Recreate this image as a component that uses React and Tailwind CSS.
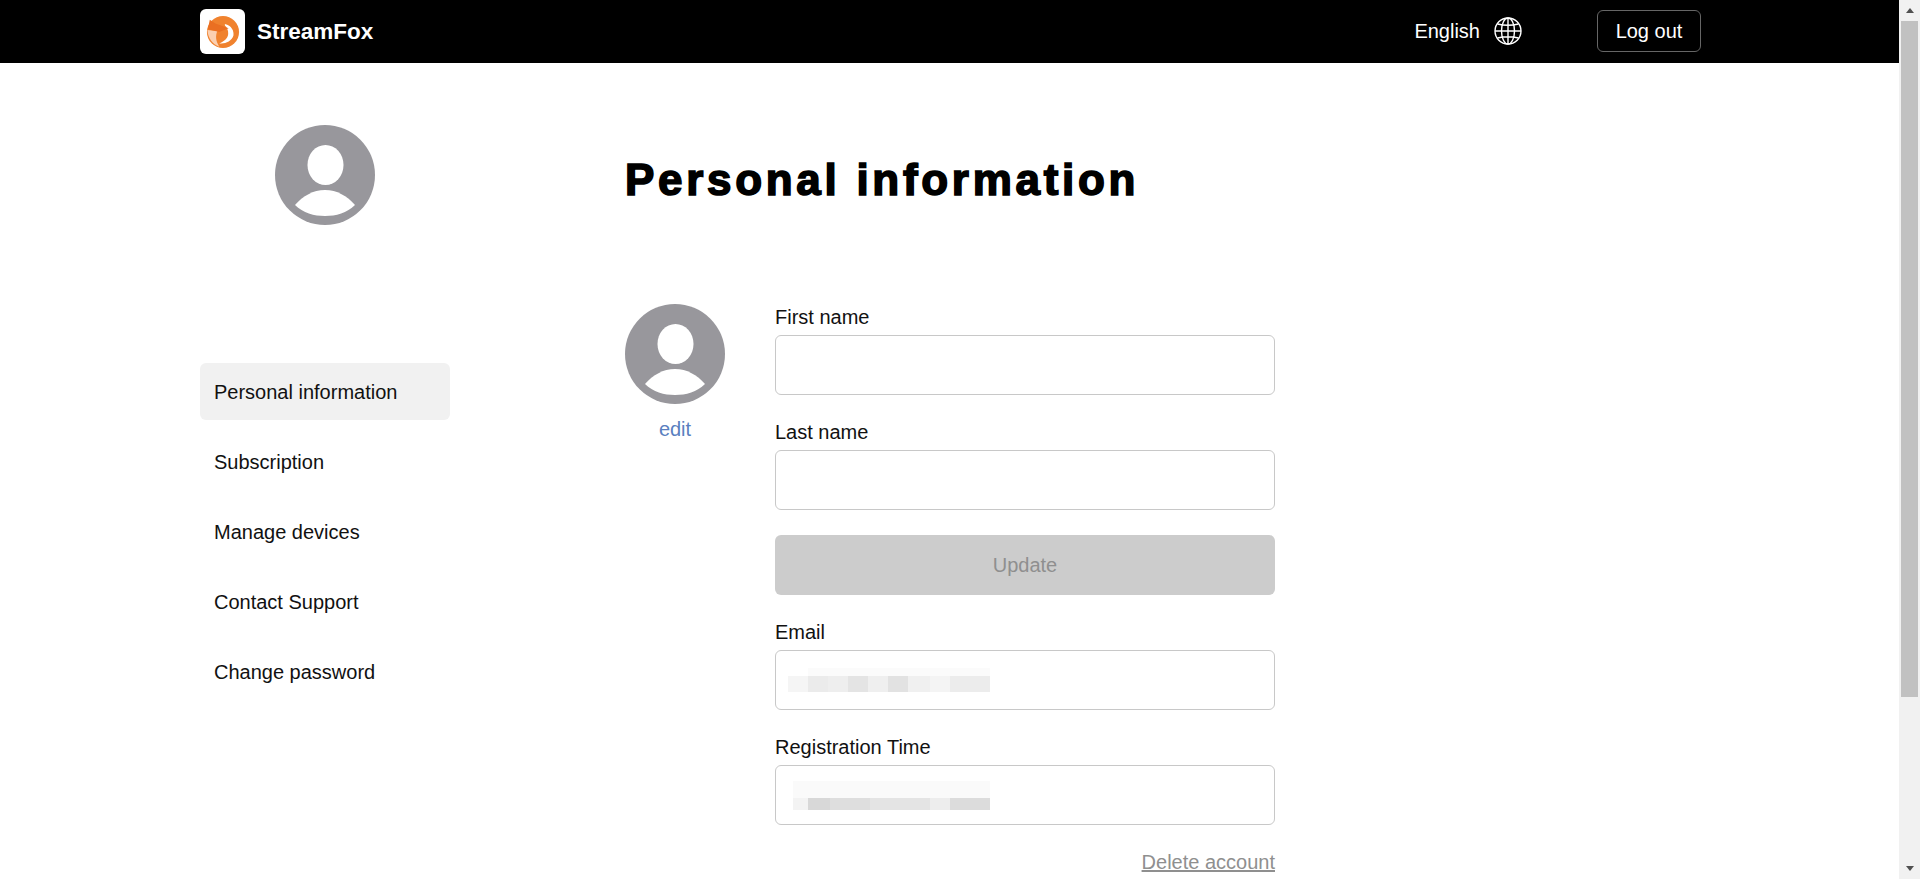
const sans = "font-['Liberation_Sans',Arial,sans-serif]";

function Avatar() {
  return (
    <svg viewBox="0 0 100 100" className="w-[100px] h-[100px] block">
      <circle cx="50" cy="50" r="50" fill="#98979c" />
      <ellipse cx="50.5" cy="40" rx="18" ry="20" fill="#fff" />
      <path d="M20 80 C28 71 38 65 50 65 C62 65 72 71 80 80 C72 88 61 91 50 91 C39 91 28 88 20 80 Z" fill="#fff" />
    </svg>
  );
}

function Logo() {
  return (
    <div className="w-[45px] h-[45px] rounded-[6px] bg-white flex items-center justify-center">
      <svg viewBox="0 0 36 36" className="w-[34px] h-[34px]">
        <circle cx="18" cy="18" r="17" fill="#f0822e" />
        <path d="M1.5 16 L12 17 C10 22 10 27 14 33.5 C7 31 2 25 1.5 16 Z" fill="#fbcfb0" />
        <path d="M20 9.5 C27 11 30 17 29 22 C27 28 20 31 14 30 C19 28 23 25 23.5 20 C23.8 16 22 13 20 11 Z" fill="#fff" />
        <path d="M4 5 L10 9 L24 14 L14 18 L2 15 Z" fill="#ea6f22" />
      </svg>
    </div>
  );
}

function Globe() {
  return (
    <svg viewBox="0 0 28 28" className="w-[28px] h-[28px]" fill="none" stroke="#fff" strokeWidth="1.4">
      <circle cx="14" cy="14" r="13" />
      <ellipse cx="14" cy="14" rx="6.5" ry="13" />
      <path d="M14 1 V27 M1 14 H27 M3.5 7 Q14 9.5 24.5 7 M3.5 21 Q14 18.5 24.5 21" />
    </svg>
  );
}

function Field({ label, children }) {
  return (
    <div className="flex flex-col">
      <label className="text-[20px] leading-[24px] mb-[6px] text-[#111]">{label}</label>
      <div className="h-[60px] rounded-[6px] border border-[#c8c8c8] bg-white flex items-center px-[12px]">{children}</div>
    </div>
  );
}

const emailSegs = [
  ["#f5f5f5", 20], ["#ebebeb", 20], ["#eeeeee", 20], ["#e4e4e4", 20], ["#efefef", 20],
  ["#e2e2e2", 20], ["#f0f0f0", 22], ["#f4f4f4", 20], ["#ececec", 40],
];
const regSegs = [
  ["#f3f3f3", 15], ["#d8d8d8", 22], ["#dedede", 40], ["#e4e4e4", 60], ["#ededed", 20], ["#dcdcdc", 40],
];

function BlurBlock({ segs, bandClass, barClass, offsetClass }) {
  return (
    <div className={`flex flex-col ${offsetClass}`}>
      <div className={bandClass}></div>
      <div className={`flex ${barClass}`}>
        {segs.map(([c, w], i) => (
          <div key={i} style={{ backgroundColor: c, width: w }}></div>
        ))}
      </div>
    </div>
  );
}

const nav = ["Subscription", "Manage devices", "Contact Support", "Change password"];

export default function App() {
  return (
    <div className={`flex h-[879px] overflow-hidden bg-white ${sans}`}>
      <div className="flex-1 min-w-0 flex flex-col">
        <header className="h-[63px] bg-black flex items-center justify-between pl-[200px] pr-[198px] shrink-0">
          <div className="flex items-center gap-[12px]">
            <Logo />
            <span className="text-white font-bold text-[22.5px]">StreamFox</span>
          </div>
          <div className="flex items-center pb-[2px]">
            <span className="text-white text-[20px]">English</span>
            <div className="ml-[14px]"><Globe /></div>
            <button className="ml-[75px] w-[104px] h-[42px] rounded-[6px] border border-[#666] text-white text-[20px]">Log out</button>
          </div>
        </header>
        <div className="flex pl-[200px]">
          <aside className="w-[250px] shrink-0 flex flex-col">
            <div className="flex justify-center pt-[62px]"><Avatar /></div>
            <nav className="mt-[138px] flex flex-col gap-[13px]">
              <div className="h-[57px] rounded-[6px] bg-[#f1f1f1] flex items-center px-[14px] text-[20px] text-[#111]">Personal information</div>
              {nav.map((n) => (
                <div key={n} className="h-[57px] flex items-center px-[14px] text-[20px] text-[#111]">{n}</div>
              ))}
            </nav>
          </aside>
          <main className="ml-[175px] w-[650px]">
            <h1 className="mt-[92px] h-[50px] text-[44px] leading-[50px] font-bold tracking-[3.7px] text-black [-webkit-text-stroke:1.6px_black]">Personal information</h1>
            <div className="mt-[99px] flex">
              <div className="w-[100px] flex flex-col items-center">
                <Avatar />
                <span className="mt-[12px] text-[20px] leading-[26px] text-[#5a7fc0]">edit</span>
              </div>
              <div className="ml-[50px] mt-[1px] w-[500px] flex flex-col">
                <Field label="First name" />
                <div className="mt-[25px]"><Field label="Last name" /></div>
                <button className="mt-[25px] h-[60px] rounded-[6px] bg-[#cccccc] text-[#8f8f8f] text-[20px]">Update</button>
                <div className="mt-[25px]">
                  <Field label="Email">
                    <BlurBlock segs={emailSegs} bandClass="h-[8px] ml-[20px] bg-[#fbfbfb]" barClass="h-[16px]" offsetClass="" />
                  </Field>
                </div>
                <div className="mt-[25px]">
                  <Field label="Registration Time">
                    <BlurBlock segs={regSegs} bandClass="h-[17px] bg-[#fafafa]" barClass="h-[12px]" offsetClass="ml-[5px]" />
                  </Field>
                </div>
                <div className="mt-[24px] flex justify-end">
                  <span className="text-[20px] leading-[26px] text-[#8f8f8f] underline">Delete account</span>
                </div>
              </div>
            </div>
          </main>
        </div>
      </div>
      <div className="w-[21px] shrink-0 bg-[#f1f1f1] flex flex-col">
        <div className="h-[21px] w-full flex items-center justify-center">
          <div className="w-0 h-0 border-l-[4px] border-r-[4px] border-b-[5px] border-l-transparent border-r-transparent border-b-[#505050]"></div>
        </div>
        <div className="ml-[2px] w-[17px] h-[676px] bg-[#c1c1c1]"></div>
        <div className="flex-1"></div>
        <div className="h-[21px] w-full flex items-center justify-center">
          <div className="w-0 h-0 border-l-[4px] border-r-[4px] border-t-[5px] border-l-transparent border-r-transparent border-t-[#505050]"></div>
        </div>
      </div>
    </div>
  );
}
